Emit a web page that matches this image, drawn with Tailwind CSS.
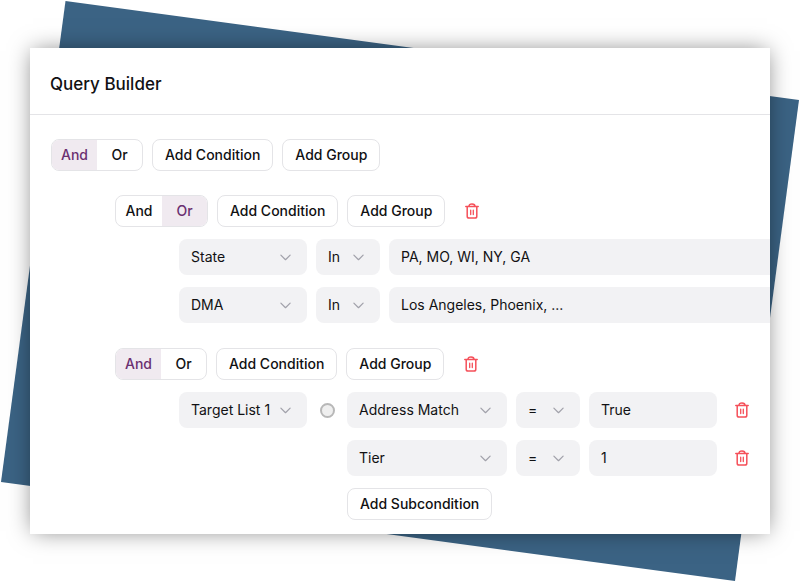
<!DOCTYPE html>
<html lang="en"><head>
<meta charset="utf-8"/>
<meta content="width=device-width, initial-scale=1.0" name="viewport"/>
<title>Query Builder</title>
<script src="https://cdn.jsdelivr.net/npm/@tailwindcss/browser@4"></script>
</head>
<body class="bg-white text-[#111113] font-[Inter,sans-serif] text-sm">

<!-- Icons -->
<svg class="hidden" xmlns="http://www.w3.org/2000/svg">
<symbol id="trash" viewBox="0 0 16 16" fill="none" stroke="currentColor" stroke-width="1.5" stroke-linecap="round" stroke-linejoin="round">
<path d="M1.8 3.600h12.400M5 3.400C5 1.700 6 .9 8 .9s3 .8 3 2.500M3.200 3.800v9.400c0 1.200.6 1.900 1.800 1.900h6c1.200 0 1.800-.7 1.800-1.900V3.800"/>
<path stroke-width="1.300" d="M6.700 7.200v4.300M9.300 7.200v4.300"/>
</symbol>
<symbol id="chevron" viewBox="0 0 10 6" fill="none" stroke="currentColor" stroke-width="1.1" stroke-linecap="round" stroke-linejoin="round">
<path d="M.8.8 5 5 9.200.8"/>
</symbol>
</svg>

<div class="relative px-[30px] py-12">
<!-- Tilted backdrop -->
<svg class="absolute inset-0 w-full h-full" viewBox="0 0 800 582" preserveAspectRatio="none" aria-hidden="true">
<polygon points="65.500,1 799,100 735,581 1,482" fill="#3b6384"/>
</svg>

<main class="relative bg-white overflow-hidden shadow-[0_0_22px_-3px_rgba(0,0,0,0.5)]">
<header class="px-5 pt-6 pb-[18px] border-b border-[#e4e4e7]">
<h1 class="text-[17px] leading-6 font-medium">Query Builder</h1>
</header>

<div class="pl-[21px] pt-6 pb-[14px]">
<div class="flex items-center gap-[9px]">
<div class="flex h-8 rounded-lg border border-[#e4e4e7] overflow-hidden font-medium" role="group" aria-label="Match">
<button type="button" aria-pressed="true" class="w-[45px] bg-[#f0eaf0] text-[#6b3070]">And</button>
<button type="button" aria-pressed="false" class="w-[45px]">Or</button>
</div>
<button type="button" class="h-8 px-3 rounded-lg border border-[#e4e4e7] font-medium">Add Condition</button>
<button type="button" class="h-8 px-3 rounded-lg border border-[#e4e4e7] font-medium">Add Group</button>
</div>

<!-- Location group -->
<section class="mt-6 pl-16">
<div class="flex items-center gap-[9px]">
<div class="flex h-8 rounded-lg border border-[#e4e4e7] overflow-hidden font-medium" role="group" aria-label="Match">
<button type="button" aria-pressed="false" class="w-[46px]">And</button>
<button type="button" aria-pressed="true" class="w-[45px] bg-[#f0eaf0] text-[#6b3070]">Or</button>
</div>
<button type="button" class="h-8 px-3 rounded-lg border border-[#e4e4e7] font-medium">Add Condition</button>
<button type="button" class="h-8 px-3 rounded-lg border border-[#e4e4e7] font-medium">Add Group</button>
<button type="button" aria-label="Delete group" class="ml-2.5 text-[#f5505a]"><svg class="size-4"><use href="#trash"/></svg></button>
</div>
<div class="mt-3 pl-16 flex flex-col gap-3">
<div class="flex gap-[9px]">
<div class="relative w-32">
<select aria-label="Field" class="appearance-none w-full h-9 pl-3 pr-[37px] rounded-lg bg-[#f2f2f4]"><option>State</option></select>
<svg class="absolute right-4 top-[15px] w-[11px] h-[7px] text-[#a1a1aa] pointer-events-none"><use href="#chevron"/></svg>
</div>
<div class="relative w-16">
<select aria-label="Operator" class="appearance-none w-full h-9 pl-3 rounded-lg bg-[#f2f2f4]"><option>In</option></select>
<svg class="absolute right-4 top-[15px] w-[11px] h-[7px] text-[#a1a1aa] pointer-events-none"><use href="#chevron"/></svg>
</div>
<input type="text" aria-label="Value" value="PA, MO, WI, NY, GA" class="flex-1 min-w-0 h-9 px-3 pb-0.5 rounded-l-lg bg-[#f2f2f4]"/>
</div>
<div class="flex gap-[9px]">
<div class="relative w-32">
<select aria-label="Field" class="appearance-none w-full h-9 pl-3 pr-[37px] rounded-lg bg-[#f2f2f4]"><option>DMA</option></select>
<svg class="absolute right-4 top-[15px] w-[11px] h-[7px] text-[#a1a1aa] pointer-events-none"><use href="#chevron"/></svg>
</div>
<div class="relative w-16">
<select aria-label="Operator" class="appearance-none w-full h-9 pl-3 rounded-lg bg-[#f2f2f4]"><option>In</option></select>
<svg class="absolute right-4 top-[15px] w-[11px] h-[7px] text-[#a1a1aa] pointer-events-none"><use href="#chevron"/></svg>
</div>
<input type="text" aria-label="Value" value="Los Angeles, Phoenix, ..." class="flex-1 min-w-0 h-9 px-3 pb-0.5 rounded-l-lg bg-[#f2f2f4]"/>
</div>
</div>
</section>

<!-- Target list group -->
<section class="mt-[25px] pl-16">
<div class="flex items-center gap-[9px]">
<div class="flex h-8 rounded-lg border border-[#e4e4e7] overflow-hidden font-medium" role="group" aria-label="Match">
<button type="button" aria-pressed="true" class="w-[45px] bg-[#f0eaf0] text-[#6b3070]">And</button>
<button type="button" aria-pressed="false" class="w-[45px]">Or</button>
</div>
<button type="button" class="h-8 px-3 rounded-lg border border-[#e4e4e7] font-medium">Add Condition</button>
<button type="button" class="h-8 px-3 rounded-lg border border-[#e4e4e7] font-medium">Add Group</button>
<button type="button" aria-label="Delete group" class="ml-2.5 text-[#f5505a]"><svg class="size-4"><use href="#trash"/></svg></button>
</div>
<div class="mt-3 pl-16 flex items-start">
<div class="relative w-32">
<select aria-label="Target list" class="appearance-none w-full h-9 pl-3 pr-[37px] rounded-lg bg-[#f2f2f4]"><option>Target List 1</option></select>
<svg class="absolute right-4 top-[15px] w-[11px] h-[7px] text-[#a1a1aa] pointer-events-none"><use href="#chevron"/></svg>
</div>
<div class="flex items-center h-9 pl-[13px] pr-3">
<input type="radio" aria-label="Exclude list" class="appearance-none size-[15px] rounded-full border-2 border-[#b8b8b8] bg-[#efefef]"/>
</div>
<div class="flex flex-col items-start gap-3">
<div class="flex items-center gap-[9px]">
<div class="relative w-40">
<select aria-label="Field" class="appearance-none w-full h-9 pl-3 pr-[37px] rounded-lg bg-[#f2f2f4]"><option>Address Match</option></select>
<svg class="absolute right-4 top-[15px] w-[11px] h-[7px] text-[#a1a1aa] pointer-events-none"><use href="#chevron"/></svg>
</div>
<div class="relative w-16">
<select aria-label="Operator" class="appearance-none w-full h-9 pl-3 rounded-lg bg-[#f2f2f4]"><option>=</option></select>
<svg class="absolute right-4 top-[15px] w-[11px] h-[7px] text-[#a1a1aa] pointer-events-none"><use href="#chevron"/></svg>
</div>
<input type="text" aria-label="Value" value="True" class="w-32 h-9 px-3 pb-0.5 rounded-lg bg-[#f2f2f4]"/>
<button type="button" aria-label="Delete condition" class="ml-2 text-[#f5505a]"><svg class="size-4"><use href="#trash"/></svg></button>
</div>
<div class="flex items-center gap-[9px]">
<div class="relative w-40">
<select aria-label="Field" class="appearance-none w-full h-9 pl-3 pr-[37px] rounded-lg bg-[#f2f2f4]"><option>Tier</option></select>
<svg class="absolute right-4 top-[15px] w-[11px] h-[7px] text-[#a1a1aa] pointer-events-none"><use href="#chevron"/></svg>
</div>
<div class="relative w-16">
<select aria-label="Operator" class="appearance-none w-full h-9 pl-3 rounded-lg bg-[#f2f2f4]"><option>=</option></select>
<svg class="absolute right-4 top-[15px] w-[11px] h-[7px] text-[#a1a1aa] pointer-events-none"><use href="#chevron"/></svg>
</div>
<input type="text" aria-label="Value" value="1" class="w-32 h-9 px-3 pb-0.5 rounded-lg bg-[#f2f2f4]"/>
<button type="button" aria-label="Delete condition" class="ml-2 text-[#f5505a]"><svg class="size-4"><use href="#trash"/></svg></button>
</div>
<button type="button" class="h-8 px-3 rounded-lg border border-[#e4e4e7] font-medium">Add Subcondition</button>
</div>
</div>
</section>
</div>
</main>
</div>

</body></html>
